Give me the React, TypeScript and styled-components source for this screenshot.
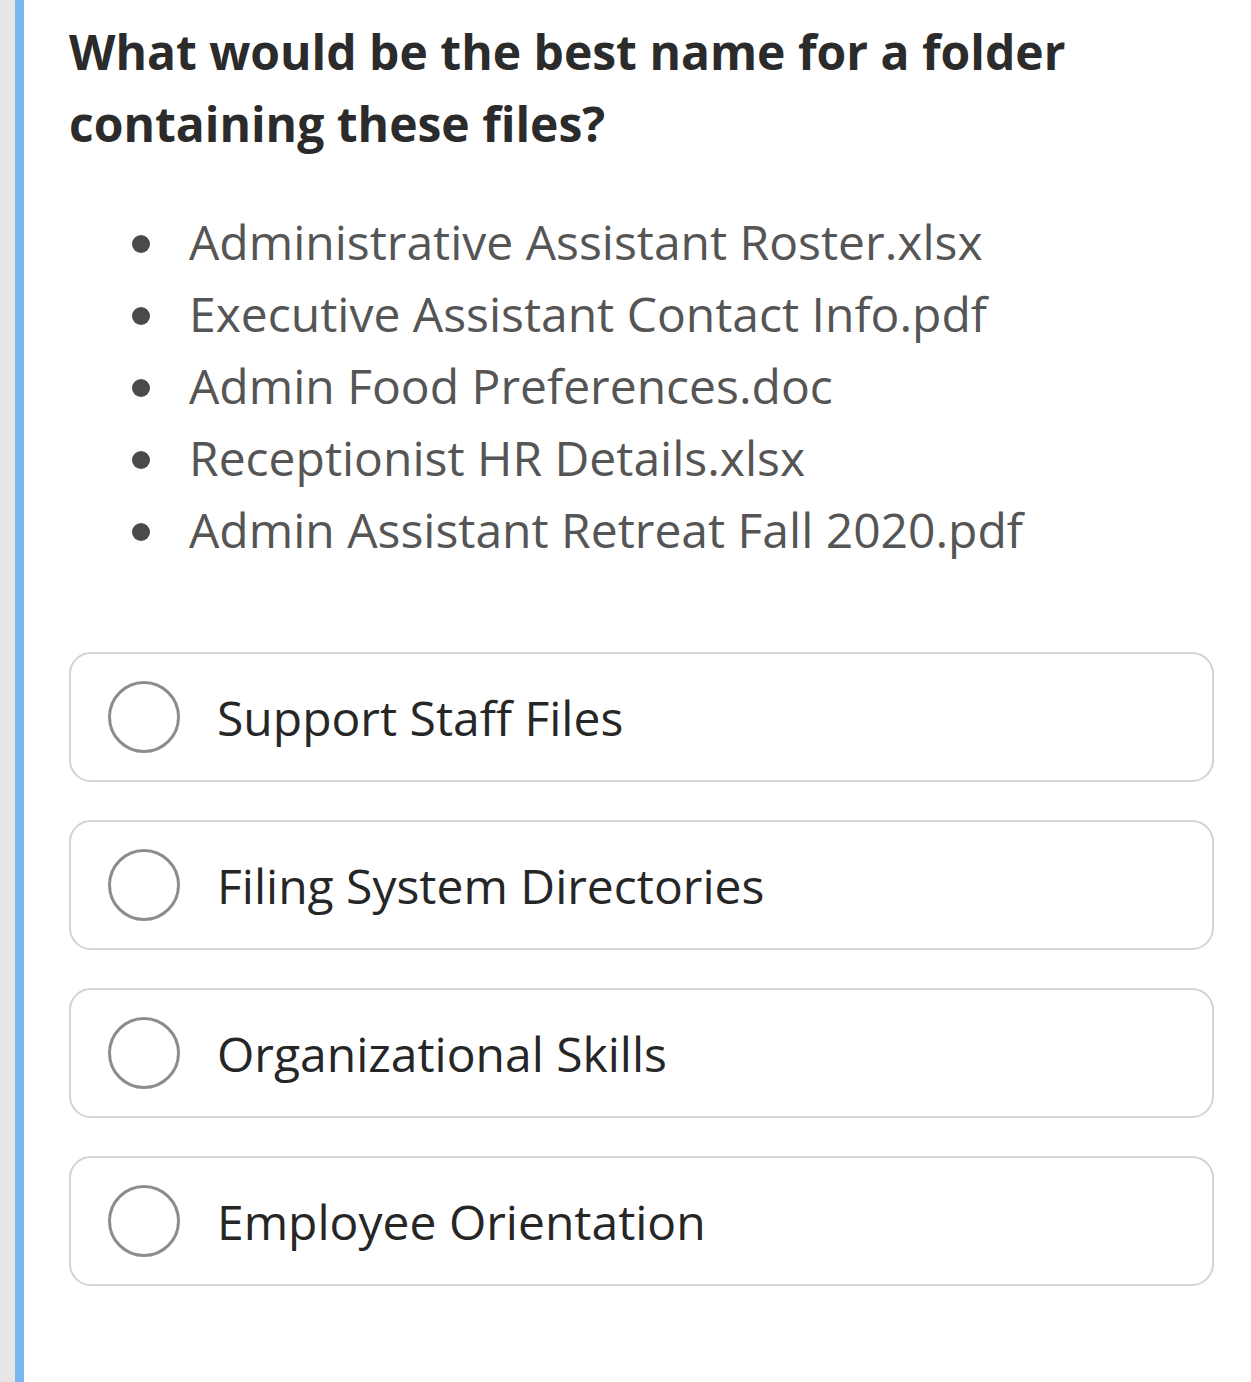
import styled, { createGlobalStyle } from "styled-components";

const GlobalStyle = createGlobalStyle`
  html, body {
    margin: 0;
    padding: 0;
    background: #ffffff;
  }
  body {
    font-family: "Open Sans", "Noto Sans", sans-serif;
  }
`;

const Page = styled.div`
  display: flex;
  min-height: 1382px;
`;

const Gutter = styled.div`
  width: 15px;
  background-color: #e6e6e6;
  flex-shrink: 0;
`;

const AccentBar = styled.div`
  width: 9px;
  background-color: #7ab6f0;
  flex-shrink: 0;
`;

const Content = styled.main`
  flex: 1;
  padding: 16px 37px 0 45px;
`;

const Question = styled.h1`
  margin: 0;
  font-size: 48px;
  line-height: 72px;
  font-weight: 700;
  color: #2b2b2b;
`;

const FileList = styled.ul`
  margin: 46px 0 0 0;
  padding: 0;
  list-style: none;
`;

const FileItem = styled.li`
  position: relative;
  padding-left: 120px;
  font-size: 48px;
  line-height: 72px;
  color: #555555;

  &::before {
    content: "";
    position: absolute;
    left: 63px;
    top: 29px;
    width: 18px;
    height: 18px;
    border-radius: 50%;
    background-color: #4a4a4a;
  }
`;

const Options = styled.div`
  display: flex;
  flex-direction: column;
  gap: 38px;
  margin-top: 86px;
`;

const Option = styled.label`
  display: flex;
  align-items: center;
  gap: 37px;
  height: 130px;
  box-sizing: border-box;
  padding: 0 0 0 37px;
  border: 2px solid #d3d3d3;
  border-radius: 22px;
  cursor: pointer;
`;

const Radio = styled.span`
  width: 72px;
  height: 72px;
  box-sizing: border-box;
  border: 3px solid #8c8c8c;
  border-radius: 50%;
  flex-shrink: 0;
`;

const OptionText = styled.span`
  font-size: 48px;
  color: #262626;
`;

const files = [
  "Administrative Assistant Roster.xlsx",
  "Executive Assistant Contact Info.pdf",
  "Admin Food Preferences.doc",
  "Receptionist HR Details.xlsx",
  "Admin Assistant Retreat Fall 2020.pdf",
];

const answers = [
  "Support Staff Files",
  "Filing System Directories",
  "Organizational Skills",
  "Employee Orientation",
];

export default function App() {
  return (
    <>
      <GlobalStyle />
      <Page>
        <Gutter />
        <AccentBar />
        <Content>
          <Question>
            What would be the best name for a folder containing these files?
          </Question>
          <FileList>
            {files.map((file) => (
              <FileItem key={file}>{file}</FileItem>
            ))}
          </FileList>
          <Options>
            {answers.map((answer) => (
              <Option key={answer}>
                <Radio />
                <OptionText>{answer}</OptionText>
              </Option>
            ))}
          </Options>
        </Content>
      </Page>
    </>
  );
}
